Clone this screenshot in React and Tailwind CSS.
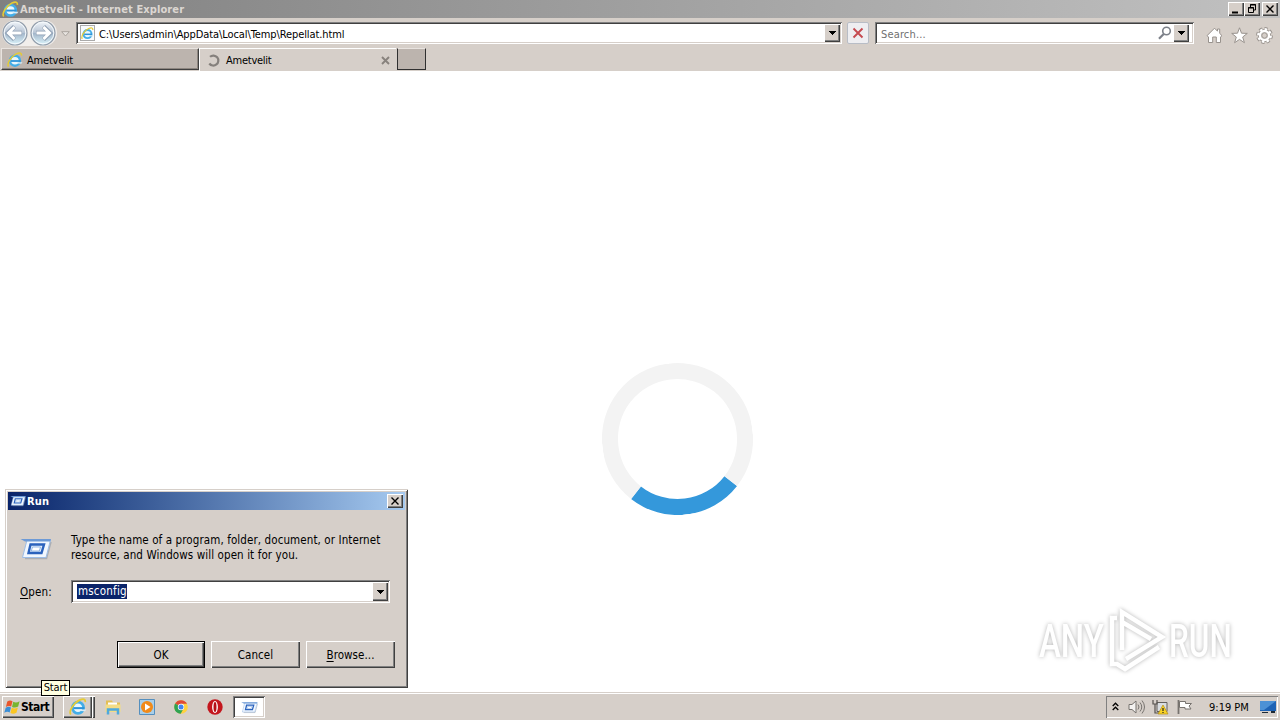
import { clsx } from 'clsx';

const RAISED = 'shadow-[inset_1px_1px_0_#ffffff,inset_-1px_-1px_0_#404040,inset_-2px_-2px_0_#808080]';
const SUNKEN = 'shadow-[inset_1px_1px_0_#808080,inset_-1px_-1px_0_#ffffff,inset_2px_2px_0_#404040,inset_-2px_-2px_0_#d6cfc9]';

function IeIcon({ className }) {
  return (
    <svg viewBox="0 0 16 16" className={className}>
      <circle cx="8" cy="8.7" r="5" fill="#e8f7fd" stroke="#43aee8" strokeWidth="2.400" />
      <path d="M4 9h9.600" stroke="#2d93d9" strokeWidth="1.800" />
      <path d="M10 10.200h5.500l-1.200 1.500-4.300-.2z" fill="#d9ecf5" />
      <path d="M1.600 14.600C-.6 12 4 4.400 9.400 1.900c3.500-1.600 5.500-.9 5 1.800" fill="none" stroke="#e5cb35" strokeWidth="1.500" />
    </svg>
  );
}

function RunIcon({ className }) {
  return (
    <svg viewBox="0 0 32 24" className={className}>
      <path d="M5 21.500h21.500L31 5" fill="none" stroke="#8d98a5" strokeWidth="1.500" opacity=".6" />
      <path d="M7 3h23.500L26 20.500H2.500z" fill="#f1f7fe" stroke="#9dbde6" />
      <path d="M.500 2h30.500l-.8 2.500H5z" fill="#6d9ad6" />
      <path d="M10.500 7.500h13.500l-2.500 8.500H8.500z" fill="#e4effb" stroke="#2a62bd" strokeWidth="2.400" />
      <path d="M12.500 10h8l-1.200 4h-8z" fill="#fff" stroke="#7ba6de" strokeWidth=".8" />
    </svg>
  );
}

function WindowsFlag() {
  return (
    <svg viewBox="0 0 18 16" className="h-4 w-[17px] shrink-0">
      <path d="M3.500 2.200C5.600.8 7.400 1 9 2L7.600 7.600C6 6.600 4 6.700 2 7.900z" fill="#e9562b" />
      <path d="M9.800 2.400c1.900 1.100 4 1.100 6.700-.5L15 7.500c-2.400 1.500-4.600 1.400-6.500.4z" fill="#78b52e" />
      <path d="M1.800 8.700c2-1.200 4-1.300 5.600-.3L6 13.800c-1.700-1-3.600-.9-5.700.4z" fill="#3b8ed6" />
      <path d="M8.200 8.800c2 1.100 4.100 1.100 6.500-.4L13.200 14c-2.400 1.500-4.500 1.400-6.400.3z" fill="#fbc622" />
    </svg>
  );
}

function DropArrow({ className }) {
  return (
    <span className={clsx('flex items-center justify-center bg-[#d6cfc9]', RAISED, className)}>
      <svg viewBox="0 0 7 4" className="h-1 w-[7px]" shapeRendering="crispEdges">
        <path d="M0 0h7L3.500 4z" fill="#000" />
      </svg>
    </span>
  );
}

function NavArrow({ back }) {
  return (
    <svg viewBox="0 0 26 26" className={clsx('h-[26px] w-[26px] shrink-0', !back && 'rotate-180')}>
      <defs>
        <linearGradient id={back ? 'navBack' : 'navForward'} x1="0" y1={back ? 0 : 1} x2="0" y2={back ? 1 : 0}>
          <stop offset="0" stopColor="#f3f7fb" />
          <stop offset=".48" stopColor="#b7c4d4" />
          <stop offset=".52" stopColor="#a4b7cb" />
          <stop offset="1" stopColor="#dcf5fb" />
        </linearGradient>
      </defs>
      <circle cx="13" cy="13" r="12" fill={`url(#${back ? 'navBack' : 'navForward'})`} stroke="#929daa" strokeWidth="1.200" />
      <circle cx="13" cy="13" r="10.800" fill="none" stroke="#f5fafd" strokeWidth="1" />
      <path d="M12.500 6.500L6 13l6.500 6.500M7 13h13" fill="none" stroke="#8e9fb3" strokeWidth="4.400" />
      <path d="M12.500 7L6.500 13l6 6M7 13h12.500" fill="none" stroke="#fff" strokeWidth="3" />
    </svg>
  );
}

function CaptionButton({ children, className }) {
  return (
    <button className={clsx('flex h-[14px] w-4 items-center justify-center bg-[#d6cfc9]', RAISED, className)}>
      <svg viewBox="0 0 16 14" className="h-[14px] w-4" fill="none" stroke="#000">
        {children}
      </svg>
    </button>
  );
}

function TitleBar() {
  return (
    <div className="flex h-[18px] items-center bg-linear-to-r from-[#808080] to-[#c1c1c1] pr-[2px] pl-[2px]">
      <IeIcon className="h-[17px] w-[17px]" />
      <span className="mt-px ml-px text-[11px] font-bold tracking-[0.11px] text-[#dcd7d2]">Ametvelit - Internet Explorer</span>
      <div className="ml-auto flex">
        <CaptionButton>
          <path d="M4 10.500h6" strokeWidth="2" />
        </CaptionButton>
        <CaptionButton>
          <path d="M6.500 5V2.500h5V8H10M6 3h6M4.500 5.500h5v5h-5zM4 6h6" />
        </CaptionButton>
        <CaptionButton className="ml-[2px]">
          <path d="M4.500 3.500l7 7M11.500 3.500l-7 7" strokeWidth="1.400" />
        </CaptionButton>
      </div>
    </div>
  );
}

function AddressBar() {
  return (
    <div className="flex h-[29px] pl-[2px]">
      <div className="mt-[2px] flex h-[26px] w-[55px] gap-[2px] rounded-full bg-[#f1eeeb]">
        <NavArrow back />
        <NavArrow />
      </div>
      <svg viewBox="0 0 9 6" className="mt-[13px] ml-1 h-[6px] w-[9px]">
        <path d="M.7.700h7.600L4.500 5z" fill="#e8e4e0" stroke="#aaa49e" />
      </svg>
      <div className={clsx('mt-1 ml-[6px] flex h-[22px] w-[766px] items-center bg-white p-[2px]', SUNKEN)}>
        <span className="ml-[2px] flex h-4 w-[15px] shrink-0 items-center justify-center border border-[#aaa] bg-[#f8fbfd]">
          <IeIcon className="h-[13px] w-[13px]" />
        </span>
        <span className="mt-[3px] ml-[4px] text-[11px] tracking-[-0.09px] text-black">C:\Users\admin\AppData\Local\Temp\Repellat.html</span>
        <DropArrow className="ml-auto h-[18px] w-4" />
      </div>
      <button className="mt-1 ml-[5px] flex h-[22px] w-[22px] items-center justify-center rounded-[2px] border border-[#b8bdc6] bg-[#eeeef1]">
        <svg viewBox="0 0 12 12" className="h-3 w-3">
          <path d="M1.500 1.500l9 9M10.500 1.500l-9 9" stroke="#c54a50" strokeWidth="1.900" />
        </svg>
      </button>
      <div className={clsx('mt-1 ml-[6px] flex h-[22px] w-[319px] items-center bg-white p-[2px]', SUNKEN)}>
        <span className="mt-[3px] ml-[4px] text-[11px] tracking-[0.15px] text-[#707070]">Search...</span>
        <svg viewBox="0 0 14 14" className="ml-auto h-[14px] w-[14px]" fill="none" stroke="#7c8189">
          <circle cx="8.500" cy="5" r="3.800" strokeWidth="1.600" />
          <path d="M5.700 8L1 12.700" strokeWidth="2.200" />
        </svg>
        <DropArrow className="mr-[3px] ml-[1px] h-[18px] w-4" />
      </div>
      <div className="mt-[9px] ml-[12px] flex gap-[8px]">
        <svg viewBox="0 0 17 17" className="h-[17px] w-[17px]" fill="#fff" stroke="#98928d">
          <path d="M8.500 1.200L1 8.700l1.500 1.200v5.600h4.200V10h3.600v5.500h4.200V9.900L16 8.700l-2.300-2.300V2h-2.200v2.200z" />
        </svg>
        <svg viewBox="0 0 17 17" className="h-[17px] w-[17px]" fill="#fff" stroke="#98928d">
          <path d="M8.500.800l2 5.400 5.800.2-4.600 3.600 1.700 5.700-4.900-3.300-4.900 3.300L5.300 10 .700 6.400l5.800-.2z" />
        </svg>
        <svg viewBox="0 0 17 17" className="h-[17px] w-[17px]">
          <circle cx="8.500" cy="8.500" r="6.500" fill="none" stroke="#98928d" strokeWidth="3.800" pathLength="80" strokeDasharray="6 4" />
          <circle cx="8.500" cy="8.500" r="4.800" fill="none" stroke="#98928d" strokeWidth="3.600" />
          <circle cx="8.500" cy="8.500" r="6.300" fill="none" stroke="#fff" strokeWidth="2.200" pathLength="80" strokeDasharray="5 5" strokeDashoffset="-.5" />
          <circle cx="8.500" cy="8.500" r="4.500" fill="none" stroke="#fff" strokeWidth="2.400" />
          <circle cx="8.500" cy="8.500" r="2.600" fill="#d6cfc9" stroke="#98928d" strokeWidth=".8" />
        </svg>
      </div>
    </div>
  );
}

function Tabs() {
  return (
    <div className="flex h-6 pt-px pl-px text-[11px] text-black">
      <div className="flex h-[22px] w-[198px] items-center border-t border-r border-b border-l border-t-[#e8e3df] border-r-[#404040] border-b-[#404040] border-l-[#e8e3df] bg-[#bcb4ae] pl-[5px] shadow-[inset_-1px_-1px_0_#8d8680]">
        <IeIcon className="mt-[2px] h-4 w-4" />
        <span className="mt-[3px] ml-[4px] tracking-[-0.2px]">Ametvelit</span>
      </div>
      <div className="flex h-[23px] w-[197px] items-center border-t border-l border-white pr-[6px] pl-[7px]">
        <svg viewBox="0 0 13 13" className="h-[13px] w-[13px] shrink-0">
          <path d="M3 2.800A5 5 0 1 1 2.300 9.500" fill="none" stroke="#85807c" strokeWidth="2.200" />
        </svg>
        <span className="mt-px ml-[6px] tracking-[-0.25px]">Ametvelit</span>
        <svg viewBox="0 0 9 9" className="ml-auto h-[9px] w-[9px]">
          <path d="M1 1l7 7M8 1L1 8" stroke="#88827d" strokeWidth="1.900" />
        </svg>
      </div>
      <div className="ml-px h-[22px] w-[29px] border border-t-[#e8e3df] border-r-[#303030] border-b-[#303030] border-l-[#303030] bg-[#bcb4ae]" />
    </div>
  );
}

function DialogButton({ children, primary }) {
  return (
    <button
      className={clsx(
        'flex h-[27px] items-center justify-center bg-[#d6cfc9] pt-px text-[11.5px] tracking-[0.05px] text-black',
        primary ? 'w-[88px] border border-black' : 'w-[89px]',
        RAISED
      )}
    >
      {children}
    </button>
  );
}

function RunDialog() {
  return (
    <div className="absolute top-[489px] left-[5px] flex h-[199px] w-[403px] flex-col bg-[#d6cfc9] p-[3px] text-[11.5px] text-black shadow-[inset_1px_1px_0_#d6cfc9,inset_-1px_-1px_0_#404040,inset_2px_2px_0_#ffffff,inset_-2px_-2px_0_#808080]">
      <div className="flex h-[18px] items-center bg-linear-to-r from-[#0a246a] to-[#a6caf0] pr-[2px] pl-[2px]">
        <RunIcon className="h-3 w-4" />
        <span className="mt-px ml-px text-[11px] font-bold tracking-[0.15px] text-white">Run</span>
        <CaptionButton className="ml-auto">
          <path d="M4.500 3.500l7 7M11.500 3.500l-7 7" strokeWidth="1.400" />
        </CaptionButton>
      </div>
      <div className="mt-[23px] flex pl-[12px]">
        <RunIcon className="mt-[4px] h-6 w-8" />
        <p className="ml-[19px] leading-[15px] tracking-[0.1px] whitespace-nowrap">
          Type the name of a program, folder, document, or Internet
          <br />
          resource, and Windows will open it for you.
        </p>
      </div>
      <div className="mt-[17px] flex items-center pl-[12px]">
        <span className="mt-px w-[51px] tracking-[0.15px]">
          <u className="underline-offset-2">O</u>pen:
        </span>
        <div className={clsx('flex h-[23px] w-[319px] items-center bg-white p-[2px]', SUNKEN)}>
          <span className="ml-[4px] bg-[#0a246a] pl-px leading-[15px] tracking-[0.2px] text-white">msconfig</span>
          <DropArrow className="ml-auto h-[19px] w-4" />
        </div>
      </div>
      <div className="mt-[38px] flex gap-[6px] pl-[109px]">
        <DialogButton primary>OK</DialogButton>
        <DialogButton>Cancel</DialogButton>
        <DialogButton>
          <span>
            <u className="underline-offset-2">B</u>rowse...
          </span>
        </DialogButton>
      </div>
    </div>
  );
}

function Watermark() {
  return (
    <div className="absolute top-[606px] left-[1039px] flex h-[68px] w-[195px] items-center justify-between text-white drop-shadow-[0_0_2px_#b4b4b4]">
      <span className="w-[66px] origin-left scale-x-[0.7] font-['Roboto'] text-[47px] leading-none font-medium">ANY</span>
      <svg viewBox="0 0 60 68" className="h-[68px] w-[60px]" fill="none" stroke="#fff" strokeWidth="4.500">
        <path d="M15 44V6l40 25L19 53M10 12H5v46h5l8 5 34-22M15 16l29 17" />
      </svg>
      <span className="w-[65px] origin-left scale-x-[0.67] font-['Roboto'] text-[47px] leading-none font-medium">RUN</span>
    </div>
  );
}

function Taskbar() {
  return (
    <div className="flex h-[28px] items-start border-t border-[#d6cfc9] bg-[#d6cfc9] text-[11px] text-black shadow-[inset_0_1px_0_#ffffff]">
      <button className={clsx('mt-[3px] ml-[2px] flex h-[22px] w-[52px] items-center pl-[2px]', RAISED)}>
        <WindowsFlag />
        <span className="text-[12px] font-bold tracking-[-0.5px]">Start</span>
      </button>
      <div className="mt-[3px] ml-[9px] flex">
        <span className={clsx('flex h-[22px] w-[29px] items-center justify-center', RAISED)}>
          <IeIcon className="h-[18px] w-[18px]" />
        </span>
        <span className={clsx('h-[22px] w-[3px]', RAISED)} />
      </div>
      <svg viewBox="0 0 16 16" className="mt-[6px] ml-[10px] h-4 w-4">
        <path d="M1 1.500h6l1 2h7V13H1z" fill="#e3bf55" />
        <path d="M3 3.500h9V8H3z" fill="#fff" />
        <path d="M.500 5.500h15V13H.5z" fill="#f3dc85" />
        <path d="M3 15.500V10.500h10v5" fill="none" stroke="#4fa9dc" strokeWidth="2.500" />
      </svg>
      <svg viewBox="0 0 16 16" className="mt-[6px] ml-[18px] h-4 w-4">
        <path d="M.5.500h15v15H.5z" fill="#a9cfe9" stroke="#558fbe" />
        <circle cx="8" cy="8" r="6" fill="#f18a19" />
        <path d="M6 4.500v7l5.500-3.500z" fill="#fff" />
      </svg>
      <svg viewBox="0 0 16 16" className="mt-[6px] ml-[18px] h-4 w-4">
        <circle cx="8" cy="8" r="6.800" fill="#ffd23f" />
        <path d="M8 8L2.100 4.600A6.800 6.800 0 0 1 14 4.800H8z" fill="#df4938" />
        <path d="M2.100 4.600A6.800 6.800 0 0 0 7.700 14.800L10.500 9.600 8 8z" fill="#30a353" />
        <circle cx="8" cy="8" r="3.200" fill="#fff" />
        <circle cx="8" cy="8" r="2.500" fill="#4384ef" />
      </svg>
      <svg viewBox="0 0 16 16" className="mt-[6px] ml-[18px] h-4 w-4">
        <circle cx="8" cy="8" r="7.700" fill="#c4161d" />
        <ellipse cx="8" cy="8" rx="2.900" ry="6" fill="#fff" />
        <ellipse cx="8" cy="8" rx="1.500" ry="5" fill="#b60f16" />
      </svg>
      <span className={clsx('mt-[3px] ml-[10px] flex h-[22px] w-8 items-center justify-center bg-white', SUNKEN)}>
        <RunIcon className="h-[13px] w-[17px]" />
      </span>
      <div className="mt-[3px] mr-[2px] ml-auto flex h-[22px] w-[172px] items-center pl-[6px] shadow-[inset_1px_1px_0_#808080,inset_-1px_-1px_0_#ffffff]">
        <svg viewBox="0 0 7 9" className="mb-[2px] h-[9px] w-[7px] shrink-0" fill="none" stroke="#000" strokeWidth="1.300">
          <path d="M.7 4l2.800-2.800L6.300 4M.7 8l2.800-2.800L6.300 8" />
        </svg>
        <svg viewBox="0 0 18 16" className="ml-[9px] h-4 w-[18px] shrink-0" fill="none" stroke="#77736f">
          <path d="M1 5.500h3L8 2v12l-4-3.500H1z" fill="#f4f2f0" />
          <path d="M10 5.500q2 2.500 0 5M12 3.500q3.500 4.500 0 9M14 1.500q5 6.500 0 13" />
        </svg>
        <svg viewBox="0 0 17 16" className="ml-[6px] h-4 w-[17px] shrink-0">
          <path d="M5 3.500h10v9H5z" fill="#d9dde1" stroke="#625f5c" />
          <path d="M1 1v4h4V1M3 5v9h5" fill="none" stroke="#55524f" strokeWidth="1.200" />
          <path d="M11 6l5 9H6z" fill="#f8d326" stroke="#b48c12" strokeWidth=".7" />
          <path d="M11 9v3M11 13v1" stroke="#222" strokeWidth="1.200" />
        </svg>
        <svg viewBox="0 0 16 16" className="ml-[8px] h-4 w-4 shrink-0">
          <path d="M1.500 1v14" stroke="#77736f" strokeWidth="1.800" />
          <path d="M2.500 2.500h6v2h6L12 7l2 3H8V8.500H2.500z" fill="#fff" stroke="#77736f" />
        </svg>
        <span className="mt-px ml-[16px] whitespace-nowrap">9:19 PM</span>
        <svg viewBox="0 0 16 14" className="mr-[2px] ml-auto h-[14px] w-4 shrink-0">
          <path d="M0 1h16v10H0z" fill="#1e63b5" />
          <path d="M0 1h16L4 10H0z" fill="#4c91d5" />
          <path d="M2 12h6v1H2zM11 11h4v2h-4z" fill="#1d2935" />
        </svg>
      </div>
    </div>
  );
}

export default function App() {
  return (
    <div className="relative flex h-[720px] w-[1280px] flex-col overflow-hidden bg-white font-['DejaVu_Sans_Condensed','DejaVu_Sans',sans-serif] leading-[14px]">
      <header className="h-[71px] bg-[#d6cfc9]">
        <TitleBar />
        <AddressBar />
        <Tabs />
      </header>
      <main className="flex flex-1 items-start justify-center pt-[292px] pl-[75px]">
        <div className="h-[152px] w-[151px] rotate-[173deg] rounded-full border-[16px] border-[#f3f3f3] border-t-[#3498db]" />
      </main>
      <Taskbar />
      <RunDialog />
      <Watermark />
      <div className="absolute top-[680px] left-[41px] flex h-4 w-[29px] items-center justify-center border border-black bg-[#ffffe1] text-[11px] tracking-[-0.1px] text-black">
        Start
      </div>
    </div>
  );
}
